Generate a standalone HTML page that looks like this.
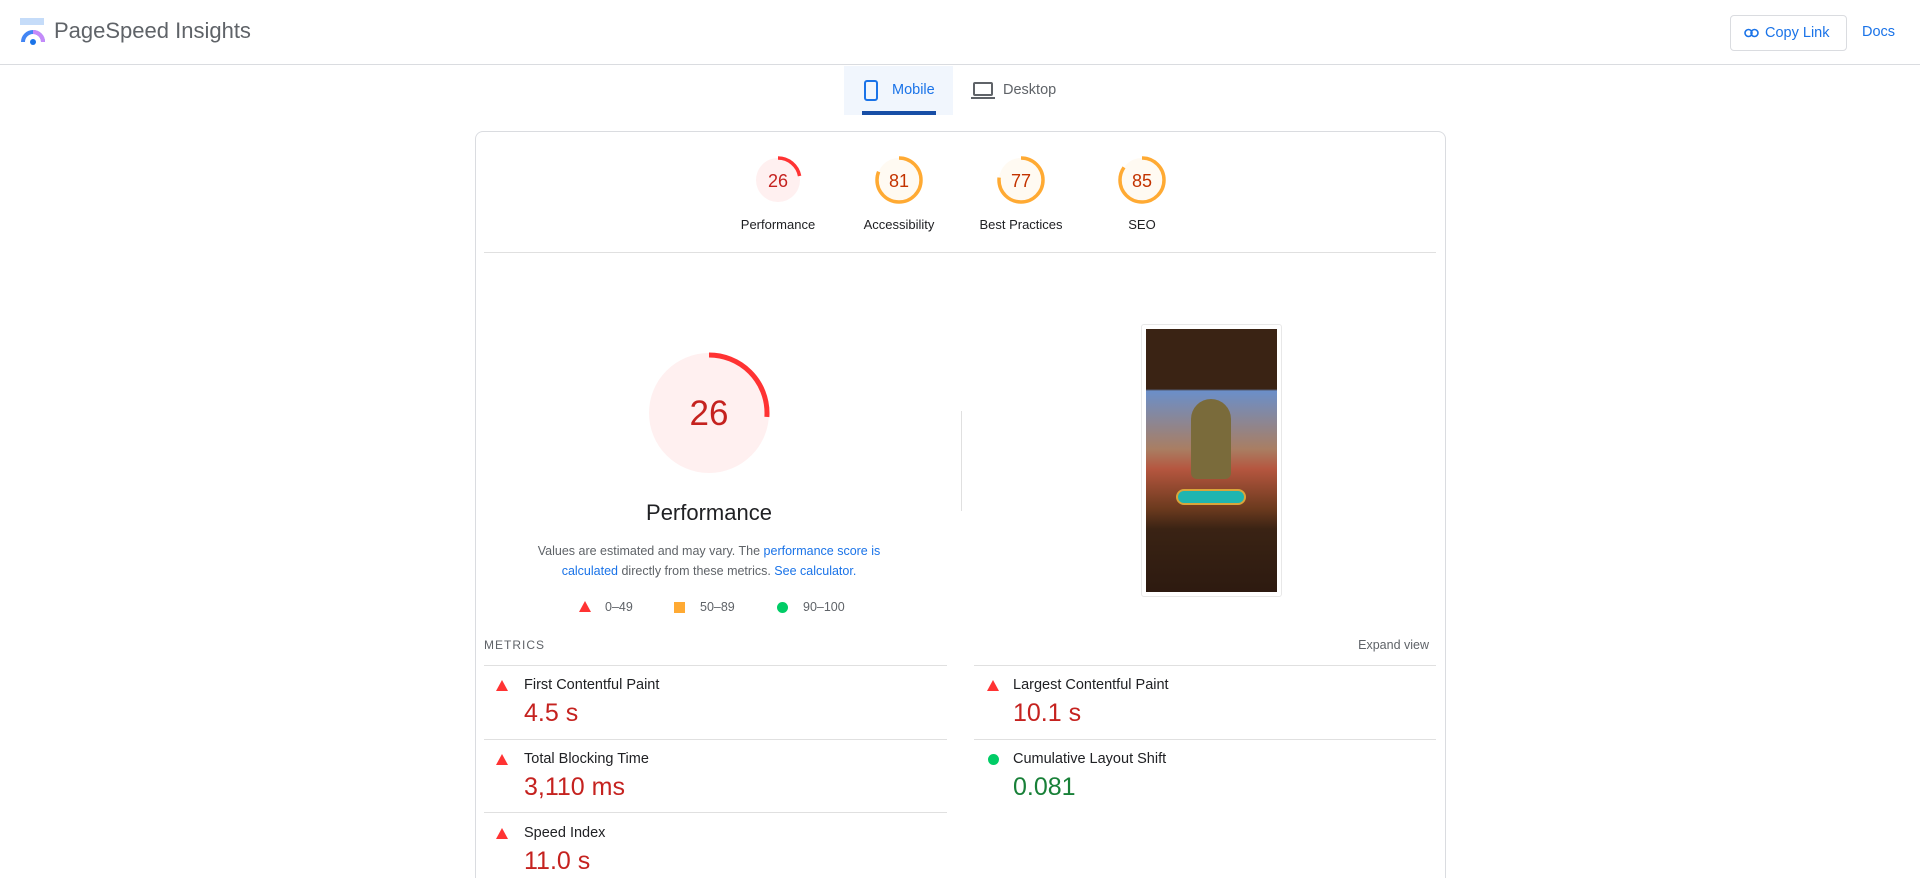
<!DOCTYPE html>
<html><head><meta charset="utf-8"><style>
*{box-sizing:border-box;margin:0;padding:0}
html,body{width:1920px;height:878px;overflow:hidden}
body{background:#fff;font-family:"Liberation Sans",sans-serif;color:#202124;position:relative}
.a{position:absolute}
.hdr{left:0;top:0;width:1920px;height:65px;border-bottom:1px solid #dadce0}
.blue{color:#1a73e8}
.gl{font-size:13px;color:#202124;text-align:center;width:120px;margin-left:-60px}
.lbl{font-size:14.5px;color:#202124}
.val{font-size:25px}
.red{color:#c5221f}.grn{color:#188038}
.tri{width:0;height:0;border-left:6px solid transparent;border-right:6px solid transparent;border-bottom:11px solid #f33}
.hl{height:1px;background:#e0e0e0}
</style></head><body>
<div class="a hdr"></div>
<svg class="a" style="left:20px;top:18px" width="26" height="28" viewBox="0 0 26 28">
<rect x="0" y="0" width="24" height="7" fill="#c5dcf9"/>
<path d="M3 24 A10 10 0 0 1 23 24" fill="none" stroke="#4285f4" stroke-width="4"/>
<path d="M13 14 A10 10 0 0 1 23 24" fill="none" stroke="#c58af9" stroke-width="4"/>
<circle cx="13" cy="24" r="3" fill="#1a73e8"/>
</svg>
<div class="a" style="left:54px;top:18px;font-size:22px;color:#5f6368">PageSpeed Insights</div>
<div class="a" style="left:1730px;top:15px;width:117px;height:36px;border:1px solid #dadce0;border-radius:4px;font-size:14.5px;color:#1a73e8;line-height:34px;padding-left:34px">Copy Link</div>
<svg class="a" style="left:1744px;top:28px" width="15" height="10" viewBox="0 0 15 10"><rect x="1" y="1.5" width="7" height="7" rx="3.5" fill="none" stroke="#1a73e8" stroke-width="1.6"/><rect x="7" y="1.5" width="7" height="7" rx="3.5" fill="none" stroke="#1a73e8" stroke-width="1.6"/></svg>
<div class="a blue" style="left:1862px;top:24px;font-size:14.5px">Docs</div>
<div class="a" style="left:844px;top:66px;width:109px;height:49px;background:#f1f6fd"></div>
<div class="a" style="left:862px;top:111px;width:74px;height:4px;background:#174ea6"></div>
<svg class="a" style="left:864px;top:80px" width="14" height="21" viewBox="0 0 14 21"><rect x="1" y="1" width="12" height="19" rx="2" fill="none" stroke="#1a73e8" stroke-width="2"/></svg>
<div class="a blue" style="left:892px;top:82px;font-size:14.5px">Mobile</div>
<svg class="a" style="left:971px;top:82px" width="24" height="18" viewBox="0 0 24 18"><rect x="3" y="1" width="18" height="12" rx="1" fill="none" stroke="#5f6368" stroke-width="2"/><rect x="0" y="15" width="24" height="2" fill="#5f6368"/></svg>
<div class="a" style="left:1003px;top:82px;font-size:14.5px;color:#5f6368">Desktop</div>
<div class="a" style="left:475px;top:131px;width:971px;height:747px;border:1px solid #dadce0;border-bottom:none;border-radius:8px 8px 0 0"></div>
<svg class="a" style="left:0;top:0" width="1920" height="878">
<g font-family="Liberation Sans" text-anchor="middle">
<circle cx="778" cy="180" r="22" fill="#fff0f0"/><path d="M778 158 A22 22 0 0 1 799.6 176" fill="none" stroke="#f33" stroke-width="3.5"/><text x="778" y="187" font-size="18" fill="#c5221f">26</text>
<circle cx="899" cy="180" r="22" fill="#fffaf2" stroke="#fa3" stroke-width="3.5" stroke-dasharray="112 138" transform="rotate(-90 899 180)"/><text x="899" y="187" font-size="18" fill="#c33300">81</text>
<circle cx="1021" cy="180" r="22" fill="#fffaf2" stroke="#fa3" stroke-width="3.5" stroke-dasharray="106 138" transform="rotate(-90 1021 180)"/><text x="1021" y="187" font-size="18" fill="#c33300">77</text>
<circle cx="1142" cy="180" r="22" fill="#fffaf2" stroke="#fa3" stroke-width="3.5" stroke-dasharray="117 138" transform="rotate(-90 1142 180)"/><text x="1142" y="187" font-size="18" fill="#c33300">85</text>
<circle cx="709" cy="413" r="60" fill="#fff0f0"/>
<circle cx="709" cy="413" r="58" fill="none" stroke="#f33" stroke-width="5" stroke-dasharray="95 400" transform="rotate(-90 709 413)"/>
<text x="709" y="425" font-size="35" fill="#c5221f">26</text>
</g></svg>
<div class="a gl" style="left:778px;top:217px">Performance</div>
<div class="a gl" style="left:899px;top:217px">Accessibility</div>
<div class="a gl" style="left:1021px;top:217px">Best Practices</div>
<div class="a gl" style="left:1142px;top:217px">SEO</div>
<div class="a hl" style="left:484px;top:252px;width:952px"></div>
<div class="a" style="left:559px;top:500px;width:300px;text-align:center;font-size:22px">Performance</div>
<div class="a" style="left:509px;top:541px;width:400px;text-align:center;font-size:12.5px;line-height:20px;color:#5f6368">Values are estimated and may vary. The <span class="blue">performance score is calculated</span> directly from these metrics. <span class="blue">See calculator.</span></div>
<div class="a tri" style="left:579px;top:601px"></div><div class="a" style="left:605px;top:600px;font-size:12.5px;color:#5f6368">0–49</div>
<div class="a" style="left:674px;top:602px;width:11px;height:11px;background:#fa3"></div><div class="a" style="left:700px;top:600px;font-size:12.5px;color:#5f6368">50–89</div>
<div class="a" style="left:777px;top:602px;width:11px;height:11px;border-radius:50%;background:#0c6"></div><div class="a" style="left:803px;top:600px;font-size:12.5px;color:#5f6368">90–100</div>
<div class="a" style="left:961px;top:411px;width:1px;height:100px;background:#e0e0e0"></div>
<div class="a" style="left:1141px;top:324px;width:141px;height:273px;border:1px solid #e8e8e8;border-radius:3px;background:#fff;padding:4px">
<div style="width:131px;height:263px;background:linear-gradient(#3a2314 0,#3a2314 60px,#6b8fc9 62px,#a97e63 120px,#b5563f 140px,#6b3a1e 180px,#3a2314 200px,#2d1a10 263px);position:relative">
<div class="a" style="left:30px;top:160px;width:70px;height:16px;border-radius:8px;background:#1fb5b0;border:2px solid #d9a53a"></div>
<div class="a" style="left:45px;top:70px;width:40px;height:80px;background:#7a6b3b;border-radius:20px 20px 6px 6px"></div>
</div></div>
<div class="a" style="left:484px;top:638px;font-size:12px;letter-spacing:1px;color:#5f6368">METRICS</div>
<div class="a" style="left:1329px;top:638px;width:100px;text-align:right;font-size:12.5px;color:#5f6368">Expand view</div>
<div class="a hl" style="left:484px;top:665px;width:463px"></div>
<div class="a hl" style="left:974px;top:665px;width:462px"></div>
<div class="a hl" style="left:484px;top:739px;width:463px"></div>
<div class="a hl" style="left:974px;top:739px;width:462px"></div>
<div class="a hl" style="left:484px;top:812px;width:463px"></div>
<div class="a tri" style="left:496px;top:680px"></div><div class="a lbl" style="left:524px;top:677px">First Contentful Paint</div><div class="a val red" style="left:524px;top:699px">4.5 s</div>
<div class="a tri" style="left:987px;top:680px"></div><div class="a lbl" style="left:1013px;top:677px">Largest Contentful Paint</div><div class="a val red" style="left:1013px;top:699px">10.1 s</div>
<div class="a tri" style="left:496px;top:754px"></div><div class="a lbl" style="left:524px;top:751px">Total Blocking Time</div><div class="a val red" style="left:524px;top:773px">3,110 ms</div>
<div class="a" style="left:988px;top:754px;width:11px;height:11px;border-radius:50%;background:#0c6"></div><div class="a lbl" style="left:1013px;top:751px">Cumulative Layout Shift</div><div class="a val grn" style="left:1013px;top:773px">0.081</div>
<div class="a tri" style="left:496px;top:828px"></div><div class="a lbl" style="left:524px;top:825px">Speed Index</div><div class="a val red" style="left:524px;top:847px">11.0 s</div>
</body></html>
